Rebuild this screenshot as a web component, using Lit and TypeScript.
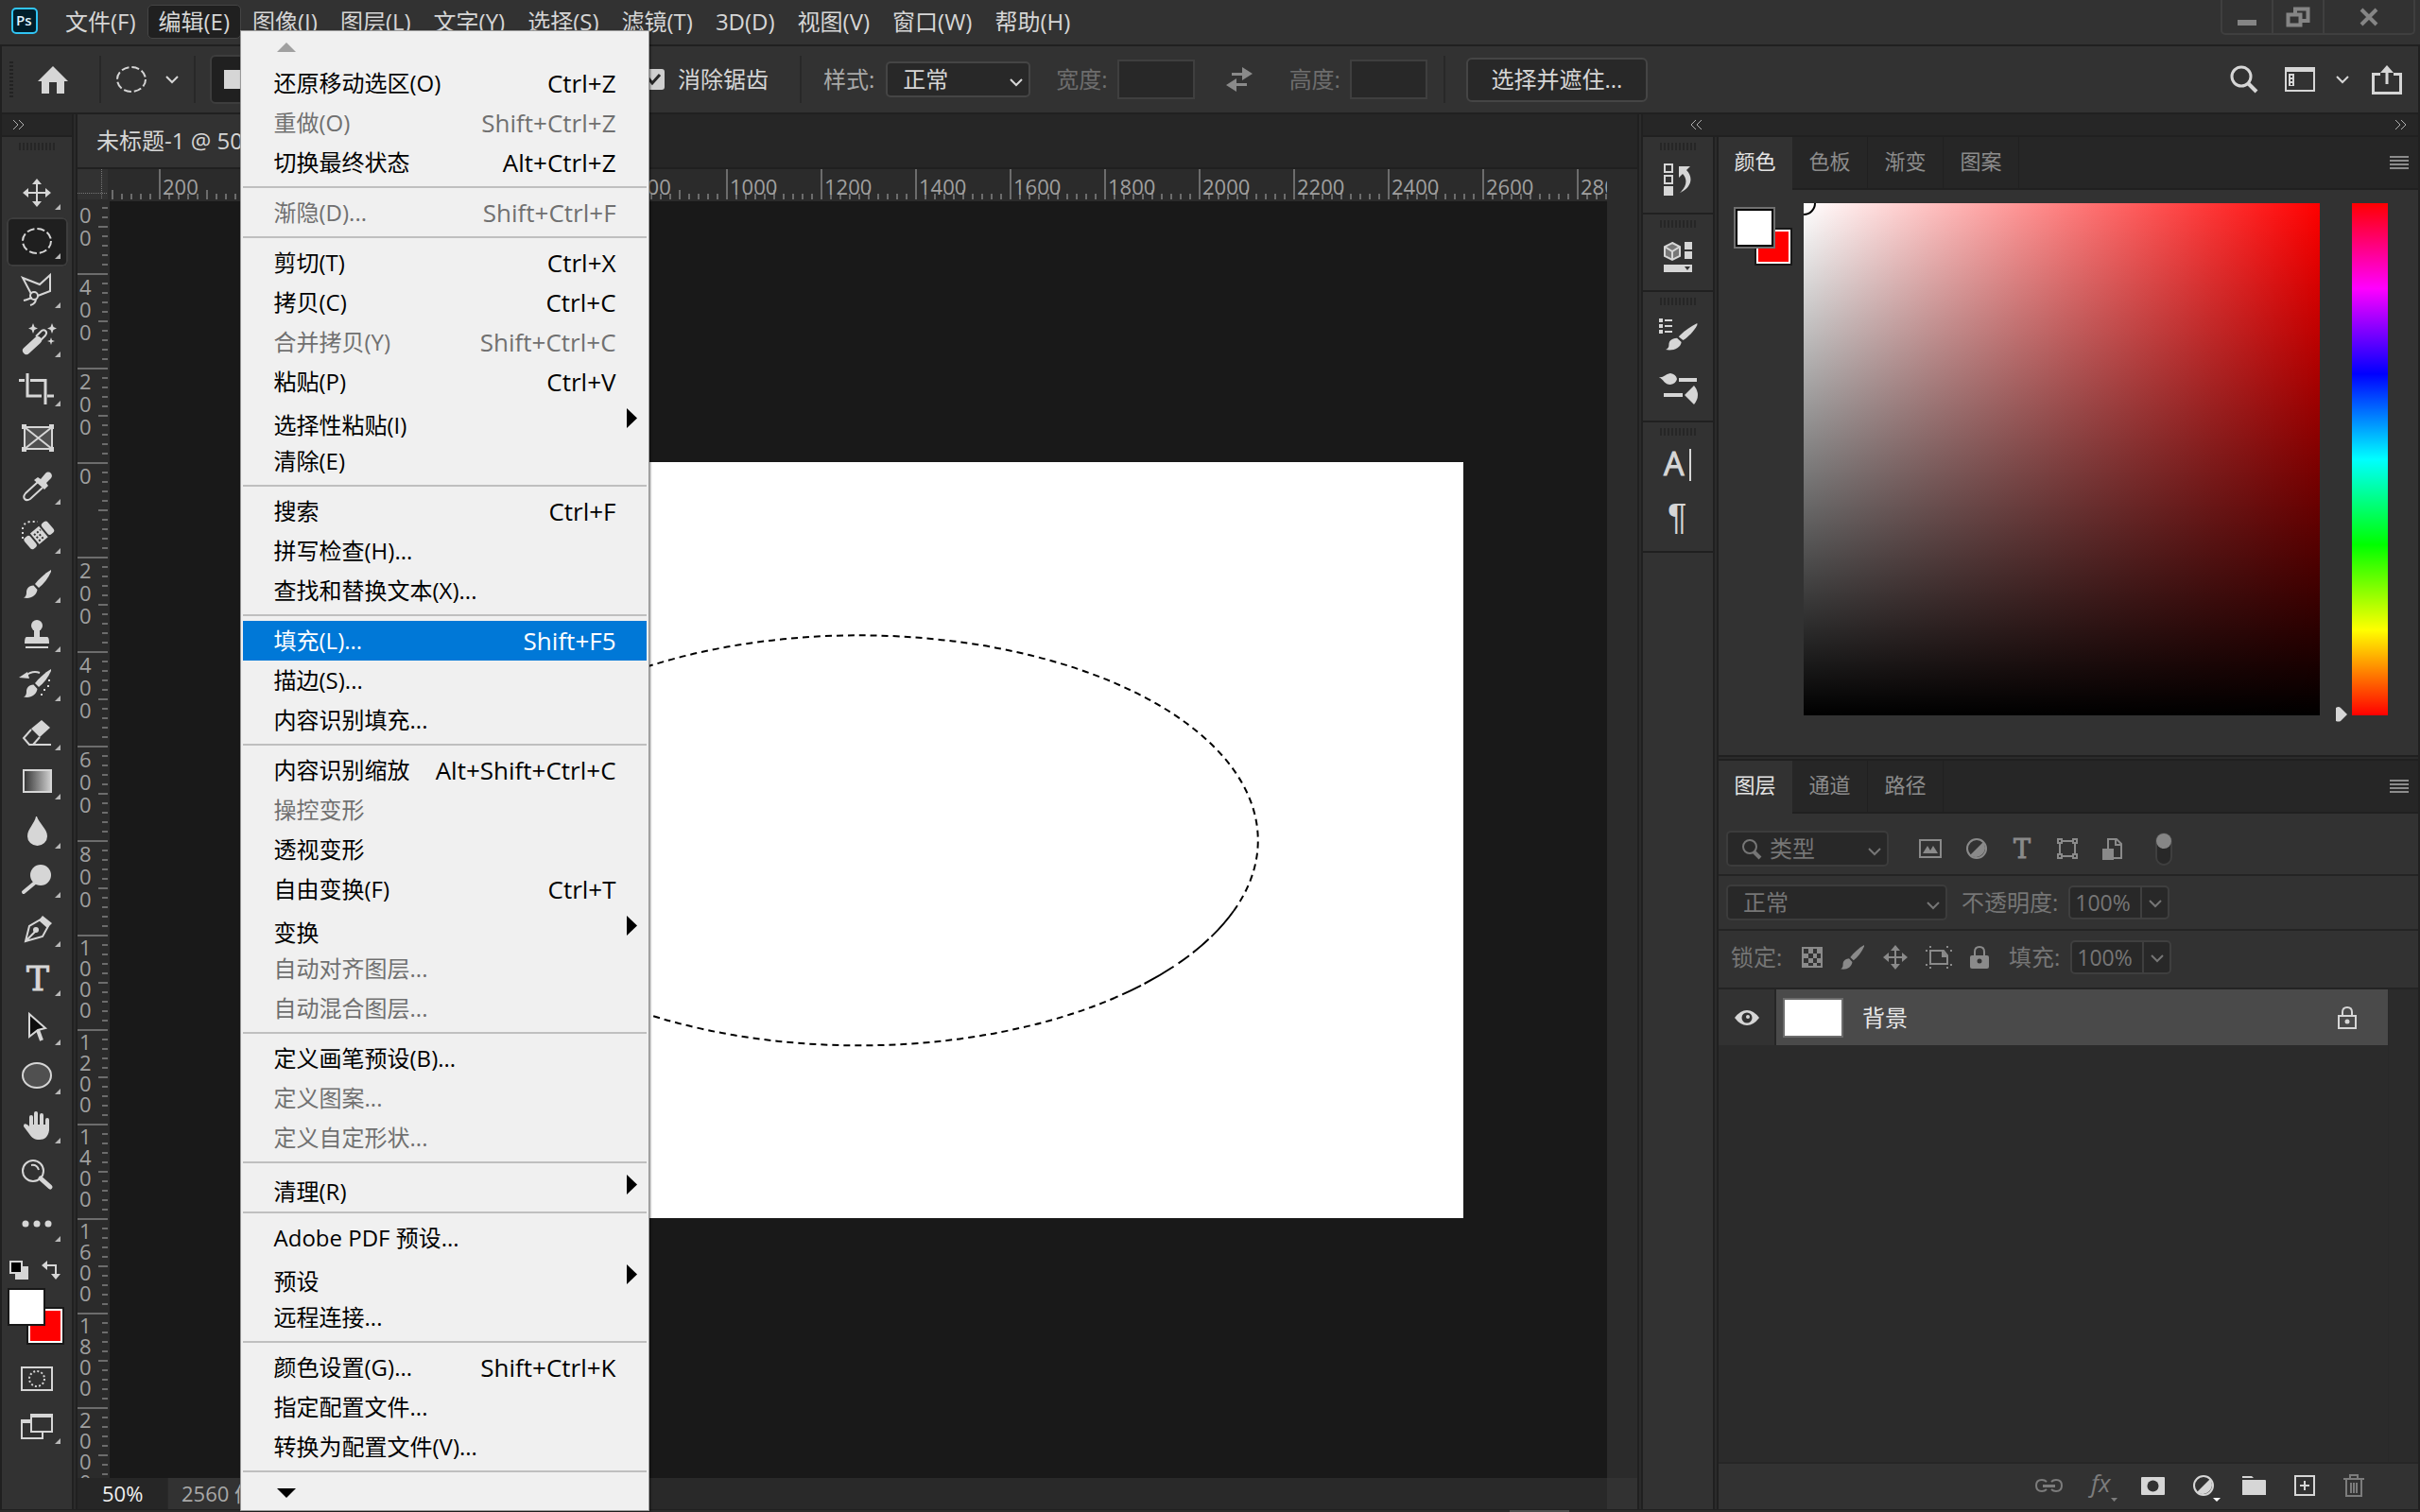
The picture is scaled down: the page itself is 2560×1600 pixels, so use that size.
import { LitElement, html, svg, css, nothing, TemplateResult } from "lit";
import { customElement } from "lit/decorators.js";
import { classMap } from "lit/directives/class-map.js";

type Entry = { label: string; keys?: string; off?: boolean; sub?: boolean; on?: boolean };

const MENUS = ["文件(F)", "编辑(E)", "图像(I)", "图层(L)", "文字(Y)", "选择(S)", "滤镜(T)", "3D(D)", "视图(V)", "窗口(W)", "帮助(H)"];

const EDIT_MENU: Entry[][] = [
  [
    { label: "还原移动选区(O)", keys: "Ctrl+Z" },
    { label: "重做(O)", keys: "Shift+Ctrl+Z", off: true },
    { label: "切换最终状态", keys: "Alt+Ctrl+Z" },
  ],
  [{ label: "渐隐(D)...", keys: "Shift+Ctrl+F", off: true }],
  [
    { label: "剪切(T)", keys: "Ctrl+X" },
    { label: "拷贝(C)", keys: "Ctrl+C" },
    { label: "合并拷贝(Y)", keys: "Shift+Ctrl+C", off: true },
    { label: "粘贴(P)", keys: "Ctrl+V" },
    { label: "选择性粘贴(I)", sub: true },
    { label: "清除(E)" },
  ],
  [{ label: "搜索", keys: "Ctrl+F" }, { label: "拼写检查(H)..." }, { label: "查找和替换文本(X)..." }],
  [{ label: "填充(L)...", keys: "Shift+F5", on: true }, { label: "描边(S)..." }, { label: "内容识别填充..." }],
  [
    { label: "内容识别缩放", keys: "Alt+Shift+Ctrl+C" },
    { label: "操控变形", off: true },
    { label: "透视变形" },
    { label: "自由变换(F)", keys: "Ctrl+T" },
    { label: "变换", sub: true },
    { label: "自动对齐图层...", off: true },
    { label: "自动混合图层...", off: true },
  ],
  [{ label: "定义画笔预设(B)..." }, { label: "定义图案...", off: true }, { label: "定义自定形状...", off: true }],
  [{ label: "清理(R)", sub: true }],
  [{ label: "Adobe PDF 预设..." }, { label: "预设", sub: true }, { label: "远程连接..." }],
  [{ label: "颜色设置(G)...", keys: "Shift+Ctrl+K" }, { label: "指定配置文件..." }, { label: "转换为配置文件(V)..." }],
];

/* Brush shape shared by several icons, drawn in a 30 x 30 box. */
const brush = svg`<path d="M29 0C22 4 16 10 12 15L16 19C21 15 26 9 29 2Z"/><path d="M10.500 16.500C5 17 3 20 3 24C3 27 2 28.500 0 29.500C7 31 13.500 28 14.500 21Z"/>`;

/* Tool glyphs, drawn in a 64 x 52 cell. */
const TOOLS: { name: string; art: unknown; flat?: boolean; on?: boolean }[] = [
  { name: "移动工具", art: svg`<path d="M32 14V38M20 26H44" class="s"/><path d="M32 11L37 17H27ZM32 41L37 35H27ZM17 26L23 21V31ZM47 26L41 21V31Z"/>` },
  { name: "椭圆选框工具", on: true, art: svg`<ellipse cx="32" cy="25" rx="15" ry="13" class="s" stroke-dasharray="8 3"/>` },
  { name: "多边形套索工具", art: svg`<path d="M26 29L17 12L35 19L46 9V26L33 31M27 33C24 34 22 35 18 36M31 34C31 37 29 40 25 41" class="s"/><circle cx="29" cy="31" r="4" class="s"/>` },
  { name: "魔棒工具", art: svg`<path d="M21 37L33 26" stroke-width="8" stroke-linecap="round" class="s"/><path d="M31 22L37 16C40 14 44 17 41 21L34 28" class="s"/><path d="M28 8L29.500 12L33 13.500L29.500 15L28 19L26.500 15L23 13.500L26.500 12ZM48 8L49.500 12L53 13.500L49.500 15L48 19L46.500 15L43 13.500L46.500 12ZM47 23L48 26L51 27L48 28L47 31L46 28L43 27L46 26Z"/>` },
  { name: "裁剪工具", art: svg`<path d="M13 16.500H19M22 9V33H37M25 16.500H41V42M43 33H50" class="s" stroke-width="3"/>` },
  { name: "图框工具", flat: true, art: svg`<rect x="19" y="14" width="29" height="23" fill="#505050" class="s"/><path d="M19 14L48 37M48 14L19 37" class="s"/><path d="M16 11H21V16H16ZM45 11H50V16H45ZM16 35H21V40H16ZM45 35H50V40H45Z"/>` },
  { name: "吸管工具", art: svg`<path d="M33 20L20 32C16 37 20 41 25 38L38 26" class="s"/><path d="M29 18L33 15L36 17L41 11C45 7 50 12 47 16L42 21L44 24L40 28Z"/>` },
  { name: "污点修复画笔工具", art: svg`<g transform="rotate(-40 34 24)"><rect x="18" y="17" width="8" height="15" rx="3"/><rect x="28" y="17" width="12" height="15"/><rect x="42" y="17" width="8" height="15" rx="3"/><path d="M30 20h2v2h-2zM34 20h2v2h-2zM38 20h1v2h-1zM30 24h2v2h-2zM34 24h2v2h-2zM30 28h2v2h-2zM34 28h2v2h-2z" fill="#323232"/></g><path d="M17 28V17Q18 11 25 10H33" class="s" stroke-dasharray="2 3"/>` },
  { name: "画笔工具", art: svg`<g transform="translate(18 9)">${brush}</g>` },
  { name: "仿制图章工具", art: svg`<circle cx="32" cy="16" r="6"/><path d="M29 18H35L35 28H43Q45 28 45 35H19Q19 28 21 28H29ZM20 38H44V40H20Z"/>` },
  { name: "历史记录画笔工具", art: svg`<g transform="translate(18 10)">${brush}</g><path d="M35 14C30 12 25 13 20 17" class="s"/><path d="M13 19L22 13L24 20Z"/><path d="M44 21v2h2v-2zM43 27v2h2v-2zM39 31v2h2v-2zM36 36v2h2v-2z"/>` },
  { name: "橡皮擦工具", art: svg`<path d="M26 21L37 12L46 20L35 30Z"/><path d="M26 22L18 31L24 38H28L35 30M24 38H47" class="s"/>` },
  { name: "渐变工具", art: svg`<defs><linearGradient id="ramp"><stop offset="0" stop-color="#323232"/><stop offset="1" stop-color="#d0d0d0"/></linearGradient></defs><rect x="18" y="13" width="29" height="23" fill="url(#ramp)" class="s"/>` },
  { name: "模糊工具", art: svg`<path d="M32 10C34 17 43 23 43 31A10.500 10 0 0 1 22 31C22 23 30 17 31 10Z"/>` },
  { name: "减淡工具", art: svg`<circle cx="36" cy="20" r="11"/><path d="M30 28L18 38" class="s" stroke-width="4" stroke-linecap="round"/>` },
  { name: "钢笔工具", art: svg`<path d="M20 38L24 22L36 15L44 22L38 33ZM20 38L31 27" class="s"/><circle cx="31" cy="26" r="3"/><path d="M38 11L48 19L43 24L34 16Z"/>` },
  { name: "横排文字工具", art: svg`<text x="33" y="38" text-anchor="middle" class="slab" font-size="36" stroke="currentColor">T</text>` },
  { name: "路径选择工具", art: svg`<path d="M24 11L41 26L33 28L24 35Z" fill="#0d0d0d" class="s"/><path d="M33 28L37 39" class="s" stroke-width="4"/>` },
  { name: "椭圆工具", art: svg`<ellipse cx="32" cy="24" rx="15" ry="13" fill="#505050" class="s"/>` },
  { name: "抓手工具", art: svg`<path d="M26 27V16M31 26V12M37 26V14M43 28V19" class="s" stroke-width="4" stroke-linecap="round"/><path d="M24 24H45V30C44 37 40 40 35 40C29 40 27 38 24 34L18 26C18 22 21 23 24 26Z"/>` },
  { name: "缩放工具", flat: true, art: svg`<circle cx="28" cy="21" r="11" class="s"/><path d="M36 29L46 38" class="s" stroke-width="5" stroke-linecap="round"/><path d="M26 15Q32 14 34 20" class="s"/>` },
  { name: "编辑工具栏", art: svg`<circle cx="20" cy="25" r="3.500"/><circle cx="32" cy="25" r="3.500"/><circle cx="44" cy="25" r="3.500"/>` },
];

const icon = (w: number, h: number, art: unknown, cls = ""): TemplateResult =>
  html`<svg class="ic ${cls}" width=${w} height=${h} viewBox="0 0 ${w} ${h}" aria-hidden="true">${art}</svg>`;

const chevron = icon(14, 8, svg`<path d="M1 1L7 7L13 1" class="s"/>`);
const lens = svg`<ellipse cx="11" cy="11" rx="10" ry="10" class="s" stroke-width="3"/><path d="M18 18L27 27" class="s" stroke-width="4"/>`;
const lines = icon(20, 14, svg`<path d="M0 1H20M0 5H20M0 9H20M0 13H20" class="s"/>`);
const left = icon(13, 10, svg`<path d="M6 0L1 5L6 10M12 0L7 5L12 10" class="t"/>`);
const right = icon(13, 10, svg`<path d="M1 0L6 5L1 10M7 0L12 5L7 10" class="t"/>`);

@customElement("app-root")
export class AppRoot extends LitElement {
  static styles = css`
    :host {
      display: block;
      --bg: #323232;
      --dim: #2b2b2b;
      --head: #262626;
      --line: #202020;
      --edge: #454545;
      --ink: #d6d6d6;
      color: var(--ink);
      font: 24px/32px "Open Sans", "Noto Sans CJK SC", sans-serif;
    }
    * { box-sizing: border-box; }
    button, input, select { font: inherit; color: inherit; margin: 0; padding: 0; background: none; border: 0; border-radius: 0; appearance: none; outline: 0; }
    label { white-space: nowrap; }
    .ic { display: block; flex: none; fill: currentColor; overflow: visible; }
    .s { stroke: currentColor; stroke-width: 2; }
    .s:not([fill]) { fill: none; }
    .s[stroke-width="3"] { stroke-width: 3; }
    .s[stroke-width="4"] { stroke-width: 4; }
    .s[stroke-width="5"] { stroke-width: 5; }
    .s[stroke-width="8"] { stroke-width: 8; }
    .t { stroke: currentColor; stroke-width: 1; fill: none; }
    .slab { font-family: "DejaVu Serif", serif; }
    .app { height: 100vh; display: flex; flex-direction: column; background: var(--line); overflow: hidden; }

    .menubar { flex: none; height: 47px; display: flex; align-items: flex-start; background: var(--bg); padding-left: 12px; }
    .logo { margin: 8px 17px 0 0; }
    .logo text { font: 600 15px "Open Sans", sans-serif; fill: #e0f4ff; }
    .menus { display: flex; padding-top: 5px; }
    .slot { position: relative; }
    .menu { display: block; height: 36px; padding: 0 11px; border: 1px solid transparent; border-radius: 5px; white-space: nowrap; line-height: 32px; }
    .menu.open { background: #202020; border-color: var(--edge); }
    .winctl { margin-left: auto; margin-right: 5px; display: flex; height: 37px; border: 2px solid #3f3f3f; border-top: 0; border-radius: 0 0 5px 5px; color: #858585; }
    .winctl button { width: 54px; display: grid; place-items: center; border-right: 2px solid #3f3f3f; }
    .winctl button:last-child { width: 94px; border: 0; }

    .options { flex: none; height: 70px; margin: 2px 2px 2px; display: flex; align-items: center; background: var(--bg); }
    .gripv { width: 4px; height: 38px; margin: 0 26px 0 8px; background: repeating-linear-gradient(#222 0 2px, transparent 2px 4px); }
    .bar { width: 2px; height: 50px; background: #282828; flex: none; }
    .home { margin-right: 33px; }
    .preset { display: flex; align-items: center; gap: 20px; margin: 0 16px; }
    .modes { flex: none; display: flex; height: 52px; padding: 0 13px; margin: 0 29px 0 15px; width: 430px; align-items: center; border: 2px solid #3d3d3d; border-radius: 6px; background: #202020; }
    .tick { width: 22px; height: 22px; border-radius: 3px; background: #cfcfcf; display: inline-grid; place-items: center; color: #262626; position: relative; }
    .tick input { position: absolute; inset: 0; }
    .check { display: flex; align-items: center; gap: 14px; margin-right: 33px; }
    .lab { margin: 0 12px 0 23px; color: #a8a8a8; }
    .lab.off { margin-left: 27px; margin-right: 10px; color: #6e6e6e; }
    .pick { flex: none; position: relative; display: flex; height: 38px; border: 2px solid var(--edge); border-radius: 5px; background: #282828; }
    .pick select { width: 100%; padding-left: 16px; }
    .pick .ic { position: absolute; right: 6px; top: 16px; pointer-events: none; }
    .style { width: 153px; }
    .size { flex: none; width: 82px; height: 42px; border: 2px solid #3f3f3f; background: #282828; }
    .swap { margin: 0 12px 0 33px; color: #8a8a8a; }
    .big { height: 47px; width: 192px; margin-left: 22px; border: 2px solid var(--edge); border-radius: 6px; background: #282828; }
    .size + .bar { margin-left: 17px; }
    .quick { margin-left: auto; margin-right: 17px; display: flex; align-items: center; }
    .quick > :nth-child(2) { margin-left: 29px; }
    .quick > :nth-child(3) { margin: 0 24px 0 22px; }

    .main { flex: 1; min-height: 0; display: flex; padding: 0 2px; }
    .gap { flex: none; width: 6px; background: var(--dim); border: solid var(--line); border-width: 0 2px; }
    .head { flex: none; height: 24px; display: flex; align-items: center; background: var(--head); border-bottom: 2px solid var(--line); color: #b0b0b0; }
    .grip { height: 8px; width: 38px; margin: 6px auto 0; flex: none; background: repeating-linear-gradient(90deg, #262626 0 2px, transparent 2px 4px); }

    .tools { flex: none; width: 74px; display: flex; flex-direction: column; background: var(--bg); }
    .tools .head { padding-left: 11px; }
    .toolset { display: flex; flex-direction: column; padding: 19px 0 12px 5px; }
    .tool { width: 65px; height: 52px; border-radius: 6px; }
    .tool.on { background: #1f1f1f; box-shadow: inset 0 0 0 2px #3d3d3d; }
    .mini { display: flex; justify-content: space-between; padding: 0 12px 0 8px; margin-bottom: 9px; }
    .chips { display: grid; grid-template: 20px 20px 20px / 20px 20px 20px; margin-left: 6px; }
    .chip { border: 2px solid #181818; }
    .fg { grid-area: 1 / 1 / 3 / 3; background: #fff; z-index: 1; }
    .bg { grid-area: 2 / 2 / 4 / 4; background: #f00; box-shadow: inset 0 0 0 2px #fff; }
    .mode { margin: 23px 0 0 20px; }
    .mode + .mode { margin-top: 24px; }

    .doc { flex: 1; min-width: 0; display: flex; flex-direction: column; background: var(--dim); }
    .doctabs { flex: none; height: 58px; display: flex; background: var(--head); border-bottom: 2px solid var(--line); }
    .doctabs button { padding: 0 20px; background: var(--bg); white-space: nowrap; }
    .sheet { flex: 1; min-height: 0; display: grid; grid-template: 34px minmax(0, 1fr) / 34px minmax(0, 1fr) 32px; }
    .corner { width: 32px; height: 32px; background: var(--bg); color: #777; }
    .hr { display: flex; overflow: hidden; height: 32px; }
    .hr span, .vr span { flex: none; color: #a0a0a0; font-size: 22px; }
    .hr span {
      width: 100px; padding-left: 4px; line-height: 36px;
      background:
        linear-gradient(#6c6c6c 0 0) 0 0 / 2px 32px no-repeat,
        linear-gradient(#6c6c6c 0 0) 50px 22px / 2px 10px no-repeat,
        repeating-linear-gradient(90deg, #6c6c6c 0 2px, transparent 2px 10px) 0 26px / 100px 6px no-repeat;
    }
    .hr span:first-child { margin-left: -48px; }
    .vr { display: flex; flex-direction: column; overflow: hidden; width: 32px; grid-row: 2; }
    .vr span {
      height: 100px; width: 32px; padding: 2px 0 0 2px; line-height: 24px;
      background:
        linear-gradient(#6c6c6c 0 0) 0 0 / 32px 2px no-repeat,
        linear-gradient(#6c6c6c 0 0) 22px 50px / 10px 2px no-repeat,
        repeating-linear-gradient(#6c6c6c 0 2px, transparent 2px 10px) 26px 0 / 6px 100px no-repeat;
    }
    .vr span.long { line-height: 22px; }
    .vr i { display: block; font-style: normal; }
    .vr span:first-child { margin-top: -24px; }
    .view { grid-area: 2 / 2; background: #191919; display: grid; place-items: center; overflow: hidden; }
    .paper { background: #fff; }
    .status { flex: none; height: 33px; display: flex; background: #292929; line-height: 32px; font-size: 22px; }
    .zoom { width: 95px; padding-left: 26px; background: var(--head); color: #f0f0f0; margin-right: 1px; }
    .info { width: 420px; padding-left: 14px; background: var(--bg); color: #a8a8a8; overflow: hidden; white-space: nowrap; }
    .nook { margin-left: auto; width: 32px; background: var(--bg); }

    .side { flex: none; width: 820px; display: flex; flex-direction: column; }
    .side .head { justify-content: space-between; padding: 0 12px 0 50px; }
    .cols { flex: 1; min-height: 0; display: flex; }
    .dock { width: 74px; display: flex; flex-direction: column; gap: 2px; }
    .group { height: 80px; background: var(--bg); display: flex; flex-direction: column; align-items: center; }
    .group.two { height: 136px; }
    .group button { height: 58px; display: grid; place-items: center; padding-top: 4px; }
    .rest { flex: 1; background: var(--bg); }
    .panels { flex: 1; min-width: 0; display: flex; flex-direction: column; background: var(--bg); font-size: 22px; }
    .tabs { flex: none; height: 56px; display: flex; background: var(--head); }
    .tabs button { flex: none; padding: 0 0 4px; border: solid #202020; border-width: 0 1px 2px 0; color: #8c8c8c; width: 80px; white-space: nowrap; }
    .tabs button.on { background: var(--bg); border-color: var(--bg); color: #e4e4e4; width: 78px; }
    .tabs .fill { flex: 1; display: flex; justify-content: flex-end; padding: 20px 10px 0 0; border-bottom: 2px solid #202020; color: #8c8c8c; }
    .color { flex: none; display: flex; align-items: flex-start; padding: 14px 32px 42px 16px; }
    .color .chips { margin: 6px 12px 0 2px; }
    .color .chips .fg { outline: 2px solid #707070; border-color: #000; }
    .field { flex: 1; height: 542px; overflow: hidden; background: linear-gradient(transparent, #000), linear-gradient(90deg, #fff, #f00); }
    .field .ic { color: #000; }
    .knob { align-self: flex-end; margin: 0 4px -7px 16px; }
    .hue { width: 38px; height: 542px; background: linear-gradient(#f00, #f0f, #00f, #0ff, #0f0, #ff0, #f00); }
    .split { flex: none; height: 6px; background: var(--dim); border: solid var(--line); border-width: 2px 0; }
    .row { flex: none; display: flex; align-items: center; padding-left: 8px; border-bottom: 2px solid #242424; color: #767676; font-size: 24px; }
    .filter { height: 66px; padding-top: 10px; }
    .blend { height: 58px; }
    .lock { height: 62px; padding-bottom: 4px; }
    .row .pick { border-color: #3c3c3c; }
    .kind { width: 172px; align-items: center; }
    .kind .ic:first-child { position: static; margin-left: 15px; }
    .kind select { padding-left: 9px; }
    .filters { display: flex; align-items: center; margin-left: 32px; gap: 26px; color: #8a8a8a; }
    .toggle { display: flex; align-items: flex-start; width: 18px; height: 35px; margin-left: 34px; border: 2px solid #3f3f3f; border-radius: 9px; background: #282828; }
    .toggle .ic { margin: -1px; color: #868686; }
    .mix { width: 234px; margin-right: 15px; }
    .lock .lead { margin-left: 5px; width: 75px; }
    .locks { display: flex; align-items: center; gap: 19px; color: #8a8a8a; margin-right: 21px; }
    .pct { flex: none; display: flex; align-items: center; height: 36px; width: 107px; margin-left: 11px; border: 2px solid #3f3f3f; border-radius: 5px; background: #282828; font-size: 23px; }
    .pct input { flex: none; width: 76px; height: 100%; padding-left: 5px; border-right: 2px solid #3f3f3f; }
    .pct button { flex: 1; display: grid; place-items: center; padding-top: 2px; }
    .list { flex: 1; min-height: 0; display: flex; background: var(--dim); }
    .layer { flex: 1; height: 59px; display: flex; align-items: center; }
    .eye { width: 61px; height: 59px; display: grid; place-items: center; background: var(--bg); border-right: 2px solid #262626; }
    .body { flex: 1; height: 59px; display: flex; align-items: center; background: #4a4a4a; padding: 0 33px 0 7px; gap: 20px; }
    .thumb { width: 64px; height: 42px; background: #fff; border: 2px solid #6c6c6c; }
    .body .name { flex: 1; font-size: 24px; text-align: left; color: #e8e8e8; }
    .track { width: 32px; border-left: 1px solid #292929; }
    .foot { flex: none; height: 50px; border-top: 2px solid #262626; display: flex; align-items: center; justify-content: flex-end; gap: 30px; padding-right: 57px; padding-bottom: 2px; }
    .foot .fade { color: #7c7c7c; }
    .end { flex: none; height: 3px; display: flex; border-top: 1px solid var(--line); background: var(--dim); }
    .end i { width: 63px; margin-left: auto; margin-right: 900px; background: #505050; }

    .drop { position: absolute; z-index: 5; left: 98px; top: 27px; width: 433px; height: calc(100vh - 33px); padding: 34px 2px 0; background: #f0f0f0; border: 1px solid #999; box-shadow: 1px 1px 2px rgba(0, 0, 0, .5); color: #000; }
    .drop hr { height: 2px; margin: 4px 0 5px; border: 0; background: #bfbfbf; }
    .item { display: flex; justify-content: space-between; align-items: center; width: 100%; height: 42px; padding: 0 32px 0 33px; line-height: 42px; white-space: nowrap; }
    .item span + span { font-size: 26px; }
    .item.sub { padding-right: 10px; padding-top: 8px; }
    .item.sub .ic { margin-bottom: 16px; }
    .item:disabled { color: #707070; }
    .item.on { background: #0078d7; color: #fff; }
    .up { display: block; margin: -22px 0 12px 36px; color: #a0a0a0; }
    .down { display: block; margin: 17px 0 0 36px; }
  `;

  private editMenu() {
    return html`<div class="drop" role="menu" aria-label="编辑">
      <button class="up" aria-label="向上滚动">${icon(20, 10, svg`<path d="M10 0L20 10H0Z"/>`)}</button>
      ${EDIT_MENU.map((group) => html`${group.map((e) => html`<button role="menuitem" class=${classMap({ item: true, sub: !!e.sub, on: !!e.on })} ?disabled=${!!e.off}>
            <span>${e.label}</span>${e.keys ? html`<span>${e.keys}</span>` : nothing}${e.sub ? icon(11, 21, svg`<path d="M0 0L11 10.500L0 21Z"/>`) : nothing}
          </button>`)}<hr />`)}
      <button class="down" aria-label="向下滚动">${icon(20, 10, svg`<path d="M0 0H20L10 10Z"/>`)}</button>
    </div>`;
  }

  private pct(id: string) {
    return html`<div class="pct"><input id=${id} value="100%" /><button aria-label="调整">${chevron}</button></div>`;
  }

  private tabs(names: string[]) {
    return html`<div class="tabs">${names.map((n, i) => html`<button class=${i ? "" : "on"}>${n}</button>`)}
      <div class="fill"><div>${lines}</div></div></div>`;
  }

  private toolbar() {
    const corner = svg`<path d="M57 38V44H51Z" fill="#b8b8b8"/>`;
    return html`<aside class="tools">
      <div class="head">${right}</div>
      <div class="grip"></div>
      <div class="toolset">
        ${TOOLS.map((t) => html`<button class=${classMap({ tool: true, on: !!t.on })} aria-label=${t.name}>${icon(64, 52, svg`${t.art}${t.flat ? nothing : corner}`)}</button>`)}
      </div>
      <div class="mini">
        <button aria-label="默认颜色">${icon(20, 20, svg`<path d="M6 6H20V20H6Z"/><rect x="1" y="1" width="12" height="12" fill="#000" class="s"/>`)}</button>
        <button aria-label="切换颜色">${icon(20, 20, svg`<path d="M4 5H15V14" class="s"/><path d="M6 0V10L0 5ZM10 14H20L15 20Z"/>`)}</button>
      </div>
      <div class="chips"><button class="chip fg" aria-label="前景色"></button><button class="chip bg" aria-label="背景色"></button></div>
      <button class="mode" aria-label="快速蒙版">${icon(34, 26, svg`<rect x="1" y="1" width="32" height="24" class="s"/><ellipse cx="17" cy="13" rx="8" ry="8" class="s" stroke-dasharray="2 2.200"/>`)}</button>
      <button class="mode" aria-label="屏幕模式">${icon(34, 27, svg`<path d="M10 7H1V26H23V20" class="s"/><path d="M0 6H10V10H0Z"/><rect x="11" y="1" width="22" height="18" class="s"/><path d="M10 0H34V4H10Z"/><path d="M42 26V32H36Z" fill="#b8b8b8"/>`)}</button>
    </aside>`;
  }

  private document() {
    const across = Array.from({ length: 17 }, (_, i) => Math.abs(i * 200 - 400));
    const down = Array.from({ length: 14 }, (_, i) => Math.abs(i * 200 - 600));
    return html`<main class="doc">
      <div class="doctabs"><button>未标题-1 @ 50%(RGB/8#)</button></div>
      <div class="sheet">
        <svg class="corner" width="32" height="32"><path d="M25.500 0V32M0 25.500H32" class="t" stroke-dasharray="1 1" /></svg>
        <div class="hr">${across.map((n) => html`<span>${n}</span>`)}</div>
        <div class="vr">${down.map((n) => html`<span class=${n > 999 ? "long" : ""}>${[...String(n)].map((d) => html`<i>${d}</i>`)}</span>`)}</div>
        <div class="view">
          <svg class="paper" width="1280" height="800" viewBox="0 0 1280 800" aria-label="画布">
            <g fill="none" stroke="#000" stroke-width="2">
              <path d="M1037 475A422 217 0 1 0 911 567" stroke-dasharray="7 5" />
              <path d="M1037 475A422 217 0 0 1 911 567" stroke-dasharray="36 4 22 5 14 6" />
            </g>
          </svg>
        </div>
      </div>
      <div class="status"><div class="zoom">50%</div><div class="info">2560 像素 x 1600 像素 (72 ppi)</div><div class="nook"></div></div>
    </main>`;
  }

  private dock() {
    return html`<div class="dock">
      <div class="group"><div class="grip"></div>
        <button aria-label="历史记录">${icon(30, 34, svg`<path d="M1 1H9V9H1ZM1 13H9V21H1Z" class="s"/><path d="M0 24H10V34H0ZM16 3H28L24 7C32 15 29 26 17 31C25 24 25 16 20 11L16 15Z"/>`)}</button></div>
      <div class="group"><div class="grip"></div>
        <button aria-label="3D">${icon(30, 32, svg`<path d="M9 1L17 5V15L9 19L1 15V5Z" fill="#777" class="s"/><path d="M1 5L9 10L17 5M9 10V19" class="s"/><path d="M22 0H30V8H22ZM22 10H30V18H22ZM0 24H30V32H0Z"/><path d="M22 26H28L25 30Z" fill="#323232"/>`)}</button></div>
      <div class="group two"><div class="grip"></div>
        <button aria-label="画笔设置">${icon(41, 34, svg`<path d="M0 0H4V4H0ZM0 6H4V10H0ZM0 12H4V16H0ZM6 1H14V3H6ZM6 7H14V9H6ZM6 13H14V15H6Z"/><g transform="translate(7 5) scale(1.150 .950)">${brush}</g>`)}</button>
        <button aria-label="画笔">${icon(41, 34, svg`<path d="M0 4C5 5 6 1 12 0Q18 1 19 6Q18 11 12 12C6 12 5 7 0 4ZM21 5H40V9H21ZM5 21H25V25H5ZM27 23L37 13Q45 23 37 33Z"/>`)}</button></div>
      <div class="group two"><div class="grip"></div>
        <button aria-label="字符">${icon(30, 34, svg`<text x="0" y="28" font-size="34" stroke="currentColor">A</text><path d="M27 0H29V34H27Z"/>`)}</button>
        <button aria-label="段落">${icon(30, 34, svg`<text x="4" y="27" font-size="38" font-family="Liberation Sans">¶</text>`)}</button></div>
      <div class="rest"></div>
    </div>`;
  }

  private layers() {
    return html`${this.tabs(["图层", "通道", "路径"])}
      <div class="row filter">
        <div class="pick kind">${icon(20, 21, svg`<circle cx="8" cy="8" r="7" class="s"/><path d="M12 13L19 20" class="s" stroke-width="4"/>`)}<select aria-label="筛选类型"><option>类型</option></select>${chevron}</div>
        <div class="filters">
          <button aria-label="像素">${icon(24, 20, svg`<rect x="1" y="1" width="22" height="18" class="s"/><path d="M4 15L9 7L12 12L15 7L20 15Z"/>`)}</button>
          <button aria-label="调整">${icon(22, 22, svg`<circle cx="11" cy="11" r="10" class="s"/><path d="M18 4A10 10 0 0 1 4 18Z"/>`)}</button>
          <button aria-label="文字">${icon(22, 22, svg`<text x="11" y="21" text-anchor="middle" class="slab" font-size="27" stroke="currentColor">T</text>`)}</button>
          <button aria-label="形状">${icon(22, 22, svg`<path d="M5 3H17M5 19H17M3 5V17M19 5V17" class="s"/><path d="M1 1H5V5H1ZM17 1H21V5H17ZM1 17H5V21H1ZM17 17H21V21H17Z" class="s"/>`)}</button>
          <button aria-label="智能对象">${icon(22, 23, svg`<path d="M6 11V1H15L20 6V21H12M14 1V7H20" class="s"/><path d="M0 11H12V23H0Z"/>`)}</button>
        </div>
        <button class="toggle" aria-label="打开或关闭筛选">${icon(16, 16, svg`<circle cx="8" cy="8" r="8"/>`)}</button>
      </div>
      <div class="row blend">
        <div class="pick mix"><select aria-label="混合模式"><option>正常</option></select>${chevron}</div>
        <label for="opacity">不透明度:</label>${this.pct("opacity")}
      </div>
      <div class="row lock">
        <span class="lead">锁定:</span>
        <div class="locks">
          <button aria-label="透明像素">${icon(22, 22, svg`<rect x="1" y="1" width="20" height="20" class="s"/><path d="M7 2h5v5h-5zM16 2h4v5h-4zM2 7h5v5h-5zM12 7h4v5h-4zM7 12h5v5h-5zM16 12h4v5h-4zM2 17h5v4h-5zM12 17h4v4h-4z"/>`)}</button>
          <button aria-label="图像像素">${icon(26, 26, svg`<g transform="scale(.860)">${brush}</g>`)}</button>
          <button aria-label="位置">${icon(26, 26, svg`<path d="M13 3V23M3 13H23" class="s"/><path d="M13 0L18 6H8ZM13 26L18 20H8ZM0 13L6 8V18ZM26 13L20 8V18Z"/>`)}</button>
          <button aria-label="画板">${icon(28, 24, svg`<path d="M5 5H19L23 10V19H5Z" class="s"/><path d="M17 4V12H24ZM0 4h2v2h-2zM4 0h2v2h-2zM22 0h2v2h-2zM26 4h2v2h-2zM0 19h2v2h-2zM4 22h2v2h-2zM22 22h2v2h-2zM26 19h2v2h-2z"/>`)}</button>
          <button aria-label="全部">${icon(20, 24, svg`<path d="M5 11V6Q5 1 10 1Q15 1 15 6V11" class="s"/><rect x="0" y="10" width="20" height="14" rx="2"/><circle cx="10" cy="16" r="2.500" fill="#323232"/>`)}</button>
        </div>
        <label for="fill">填充:</label>${this.pct("fill")}
      </div>
      <div class="list">
        <div class="layer">
          <button class="eye" aria-label="可见性">${icon(26, 16, svg`<path d="M0 8Q6 0 13 0Q20 0 26 8Q20 16 13 16Q6 16 0 8Z"/><circle cx="13" cy="8" r="5.500" fill="#323232"/><circle cx="14" cy="7" r="2"/>`)}</button>
          <div class="body"><div class="thumb"></div><span class="name">背景</span>
            ${icon(20, 24, svg`<path d="M5 9V6Q5 1 10 1Q15 1 15 6V9" class="s"/><rect x="1" y="10" width="18" height="13" class="s"/><circle cx="10" cy="16" r="2.500"/>`)}</div>
        </div>
        <div class="track"></div>
      </div>
      <div class="foot">
        <button class="fade" aria-label="链接">${icon(29, 14, svg`<path d="M12 3Q10 1 7 1Q1 1 1 7Q1 13 7 13Q10 13 12 11M17 3Q19 1 22 1Q28 1 28 7Q28 13 22 13Q19 13 17 11" class="s"/><path d="M8 6H21V9H8Z"/>`)}</button>
        <button class="fade" aria-label="图层样式">${icon(23, 24, svg`<text x="0" y="19" font-size="26" font-style="italic" font-family="Open Sans">fx</text><path d="M21 25H28L24.500 29Z"/>`)}</button>
        <button aria-label="图层蒙版">${icon(25, 19, svg`<rect width="25" height="19" rx="1"/><circle cx="12.500" cy="9.500" r="6" fill="#323232"/>`)}</button>
        <button aria-label="调整图层">${icon(22, 22, svg`<circle cx="11" cy="11" r="10" class="s"/><path d="M18 4A10 10 0 0 1 4 18Z"/><path d="M21 24H29L25 28Z" fill="#fff"/>`)}</button>
        <button aria-label="新建组">${icon(25, 20, svg`<path d="M0 0H10L12 2H0ZM0 4H24Q25 4 25 5V20H0Z"/>`)}</button>
        <button aria-label="新建图层">${icon(22, 22, svg`<rect x="1" y="1" width="20" height="20" class="s"/><path d="M11 6V16M6 11H16" class="s"/>`)}</button>
        <button class="fade" aria-label="删除图层">${icon(22, 24, svg`<path d="M0 5H22M7 4V1H15V4M3 6V23H19V6M8 9V20M11 9V20M14 9V20" class="s"/>`)}</button>
      </div>`;
  }

  render() {
    return html`<div class="app">
      <header class="menubar">
        <svg class="logo" width="28" height="28" viewBox="0 0 28 28"><rect x="1" y="1" width="26" height="26" rx="4" fill="#001e2b" stroke="#31c5f4" stroke-width="2" /><text x="5" y="19">Ps</text></svg>
        <nav class="menus">${MENUS.map((m, i) => html`<div class="slot"><button class=${classMap({ menu: true, open: i === 1 })}>${m}</button>${i === 1 ? this.editMenu() : nothing}</div>`)}</nav>
        <div class="winctl">
          <button aria-label="最小化">${icon(20, 20, svg`<path d="M0 13H20V19H0Z"/>`)}</button>
          <button aria-label="还原">${icon(24, 20, svg`<path d="M9 7V1.500H22.500V14H16" class="s" stroke-width="4"/><rect x="1.500" y="7.500" width="13" height="11" class="s" stroke-width="4"/>`)}</button>
          <button aria-label="关闭">${icon(20, 16, svg`<path d="M2 0L18 16M18 0L2 16" class="s" stroke-width="4"/>`)}</button>
        </div>
      </header>

      <div class="options">
        <div class="gripv"></div>
        <button class="home" aria-label="主页">${icon(32, 29, svg`<path d="M16 0L32 16H28V29H20V17H12V29H4V16H0Z"/>`)}</button>
        <div class="bar"></div>
        <button class="preset" aria-label="工具预设">${icon(32, 28, svg`<ellipse cx="16" cy="14" rx="15" ry="13" class="s" stroke-dasharray="8 3"/>`)}${chevron}</button>
        <div class="bar"></div>
        <div class="modes"><button aria-label="新选区">${icon(20, 20, svg`<path d="M0 0H20V20H0Z"/>`)}</button></div>
        <label class="check"><span class="tick"><input type="checkbox" checked />${icon(14, 12, svg`<path d="M1 5L5 10L13 1" class="s" stroke-width="3"/>`)}</span>消除锯齿</label>
        <div class="bar"></div>
        <label class="lab" for="style">样式:</label>
        <div class="pick style"><select id="style"><option>正常</option></select>${chevron}</div>
        <label class="lab off" for="w">宽度:</label><input id="w" class="size" />
        <button class="swap" aria-label="交换宽高">${icon(28, 26, svg`<path d="M6 6H17V0L28 7L17 14V9H6ZM22 17H11V12L0 19L11 26V20H22Z"/>`)}</button>
        <label class="lab off" for="h">高度:</label><input id="h" class="size" />
        <div class="bar"></div>
        <button class="big">选择并遮住...</button>
        <div class="quick">
          <button aria-label="搜索">${icon(28, 28, lens)}</button>
          <button aria-label="工作区">${icon(32, 26, svg`<rect x="1" y="1" width="30" height="24" class="s"/><path d="M0 0H32V5H0ZM4 7H10V20H4Z"/><path d="M6 9h2v2h-2zM6 13h2v2h-2zM6 17h2v2h-2z" fill="#323232"/>`)}</button>
          <button aria-label="工作区列表">${chevron}</button>
          <button aria-label="共享">${icon(32, 31, svg`<path d="M9 9.500H1.500V29.500H30.500V9.500H23M16 20V6" class="s" stroke-width="3"/><path d="M16 0L23 8H9Z"/>`)}</button>
        </div>
      </div>

      <div class="main">
        ${this.toolbar()}
        <div class="gap"></div>
        ${this.document()}
        <div class="gap"></div>
        <div class="side">
          <div class="head">${left}${right}</div>
          <div class="cols">
            ${this.dock()}
            <div class="gap"></div>
            <div class="panels">
              ${this.tabs(["颜色", "色板", "渐变", "图案"])}
              <div class="color">
                <div class="chips"><button class="chip fg" aria-label="前景色"></button><button class="chip bg" aria-label="背景色"></button></div>
                <div class="field">${icon(14, 14, svg`<circle r="12" class="s"/>`)}</div>
                <div class="knob">${icon(14, 16, svg`<path d="M1 2Q4 0 6 2L13 9L6 16Q4 17 1 16Z" transform="translate(0 -1)"/>`)}</div>
                <div class="hue"></div>
              </div>
              <div class="split"></div>
              ${this.layers()}
            </div>
          </div>
        </div>
      </div>
      <div class="end"><i></i></div>
    </div>`;
  }
}
